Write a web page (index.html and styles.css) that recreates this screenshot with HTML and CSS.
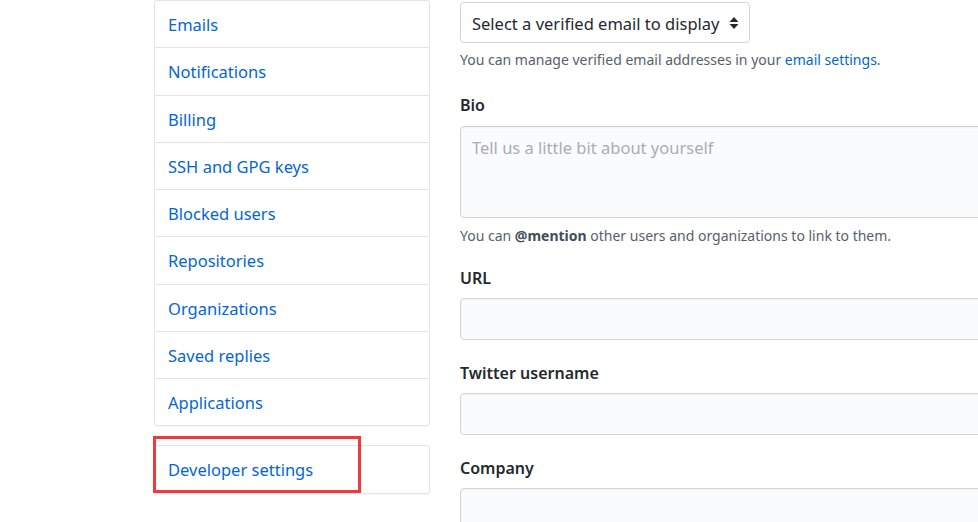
FILE: index.html
```html
<!DOCTYPE html>
<html lang="en">
<head>
<meta charset="utf-8">
<title>Profile settings</title>
<link rel="stylesheet" href="styles.css">
</head>
<body>
<div class="page">
  <nav class="sidebar">
    <ul class="menu">
      <li><a href="#">Emails</a></li>
      <li><a href="#">Notifications</a></li>
      <li><a href="#">Billing</a></li>
      <li><a href="#">SSH and GPG keys</a></li>
      <li><a href="#">Blocked users</a></li>
      <li><a href="#">Repositories</a></li>
      <li><a href="#">Organizations</a></li>
      <li><a href="#">Saved replies</a></li>
      <li><a href="#">Applications</a></li>
    </ul>
    <ul class="menu menu-dev">
      <li><a href="#">Developer settings</a></li>
    </ul>
  </nav>
  <main class="form">
    <div class="select">
      <span>Select a verified email to display</span>
      <svg class="caret" width="10" height="14" viewBox="0 0 10 14"><path d="M5 1 L9.5 6 H0.5 Z M5 13 L0.5 8 H9.5 Z" fill="#24292e"/></svg>
    </div>
    <p class="note note-first">You can manage verified email addresses in your <a href="#">email settings</a>.</p>

    <div class="group group-bio">
      <label>Bio</label>
      <div class="textarea">Tell us a little bit about yourself</div>
      <p class="note">You can <strong>@mention</strong> other users and organizations to link to them.</p>
    </div>

    <div class="group group-url">
      <label>URL</label>
      <div class="input"></div>
    </div>

    <div class="group">
      <label>Twitter username</label>
      <div class="input"></div>
    </div>

    <div class="group">
      <label>Company</label>
      <div class="input"></div>
    </div>
  </main>
</div>
<div class="highlight"></div>
</body>
</html>
```

FILE: styles.css
```css
html, body {
  margin: 0;
  padding: 0;
  background: #fff;
  overflow: hidden;
  height: 522px;
}
body {
  font-family: "Noto Sans", "Open Sans", sans-serif;
  color: #24292e;
  position: relative;
}
a {
  color: #0366d6;
  text-decoration: none;
}
.page {
  display: flex;
  gap: 30px;
  padding-left: 154px;
}
.sidebar {
  width: 276px;
  flex: none;
}
.menu {
  list-style: none;
  margin: 0;
  padding: 0;
  border: 1px solid #e1e4e8;
  border-radius: 3px;
  box-shadow: 0 1px 0 rgba(0,0,0,0.03);
}
.menu li {
  border-top: 1px solid #e1e4e8;
}
.menu li:first-child {
  border-top: none;
}
.menu a {
  display: block;
  padding: 11px 13px 9px;
  font-size: 16.5px;
  line-height: 26.25px;
}
.menu-dev {
  margin-top: 19px;
}
.form {
  flex: none;
  width: 560px;
}
.select {
  margin-top: 2px;
  width: 290px;
  height: 41px;
  box-sizing: border-box;
  border: 1px solid #d1d5da;
  border-radius: 4px;
  display: flex;
  align-items: center;
  justify-content: space-between;
  padding: 1px 10px 0 11px;
  font-size: 16.5px;
  background: #fff;
}
.caret {
  display: block;
}
.note {
  margin: 6px 0 0;
  font-size: 14px;
  line-height: 22px;
  color: #586069;
}
.note strong {
  color: #444d56;
  font-weight: 700;
}
.group {
  margin-top: 20px;
}
.group-bio {
  margin-top: 21px;
}
.group-url {
  margin-top: 18px;
}
label {
  display: block;
  font-size: 16px;
  font-weight: 600;
  line-height: 26px;
  margin-bottom: 7px;
}
.group-bio label {
  margin-bottom: 8px;
}
.textarea, .input {
  box-sizing: border-box;
  border: 1px solid #d1d5da;
  border-radius: 4px;
  background: #fafbfc;
  box-shadow: inset 0 1px 2px rgba(27,31,35,0.05);
  width: 560px;
}
.textarea {
  height: 92px;
  padding: 8px 11px;
  font-size: 16.5px;
  line-height: 26px;
  color: #a8aeb5;
}
.group-bio .note {
  margin-top: 7px;
}
.input {
  height: 42px;
}
.highlight {
  position: absolute;
  left: 153px;
  top: 436px;
  width: 208px;
  height: 57px;
  box-sizing: border-box;
  border: 3px solid #f0393b;
}
```
